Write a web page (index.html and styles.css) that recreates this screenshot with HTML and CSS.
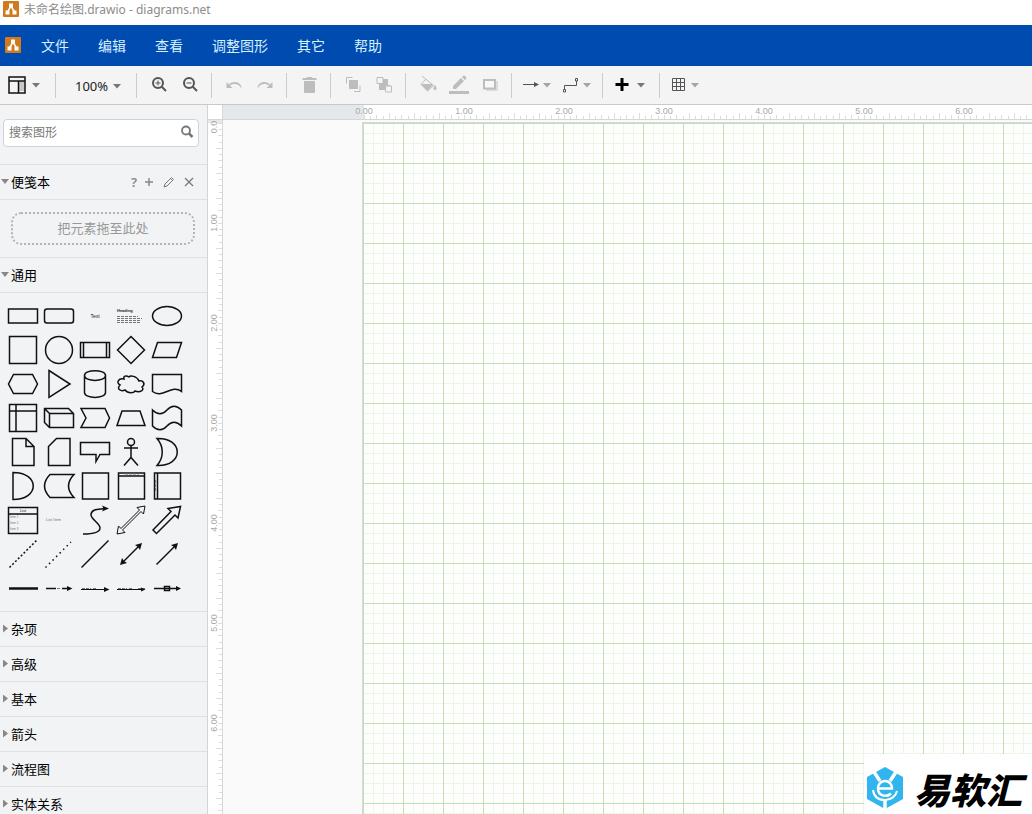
FILE: index.html
```html
<!DOCTYPE html>
<html lang="zh-CN">
<head>
<meta charset="utf-8">
<title>未命名绘图.drawio - diagrams.net</title>
<link rel="stylesheet" href="styles.css">
</head>
<body>
<svg class="defs" width="0" height="0" aria-hidden="true">
  <defs>
    <symbol id="logo" viewBox="0 0 16 16">
      <rect width="16" height="16" rx="1" fill="#d07a1c"/>
      <path d="M8 5 4.500 11M8 5l3.500 6" stroke="#fff" stroke-width="1.500"/>
      <path d="M6 2.500h4v4H6zM2.500 9.500h4v4h-4zM9.500 9.500h4v4h-4z" fill="#fff"/>
    </symbol>
    <symbol id="caret" viewBox="0 0 10 10"><path d="M1 3h8L5 7.500z" fill="currentColor"/></symbol>
  </defs>
</svg>

<header class="titlebar">
  <svg class="app-icon"><use href="#logo"/></svg>
  <span>未命名绘图.drawio - diagrams.net</span>
</header>

<nav class="menubar">
  <svg class="menu-icon"><use href="#logo"/></svg>
  <button>文件</button>
  <button>编辑</button>
  <button>查看</button>
  <button>调整图形</button>
  <button>其它</button>
  <button>帮助</button>
</nav>

<div class="toolbar" role="toolbar">
  <div class="group tight first">
    <button class="drop wide" aria-label="视图">
      <svg class="icon" viewBox="0 0 20 20"><path d="M11.500 6h6v10h-6z" fill="#c8c8c8"/><path d="M2 2h16v16H2zM2 6h16M11.500 6v12" fill="none" stroke="#111" stroke-width="1.500"/></svg>
      <svg class="caret"><use href="#caret"/></svg>
    </button>
  </div>
  <div class="group zoom">
    <button class="drop wide"><span>100%</span><svg class="caret"><use href="#caret"/></svg></button>
  </div>
  <div class="group">
    <button aria-label="放大"><svg class="icon dark" viewBox="0 0 20 20"><circle cx="9" cy="8" r="5" class="s2"/><path d="M12.500 11.500 17 16" class="s2"/><path d="M6.500 8h5M9 5.500v5" class="s1"/></svg></button>
    <button aria-label="缩小"><svg class="icon dark" viewBox="0 0 20 20"><circle cx="9" cy="8" r="5" class="s2"/><path d="M12.500 11.500 17 16" class="s2"/><path d="M6.500 8h5" class="s1"/></svg></button>
  </div>
  <div class="group">
    <button aria-label="撤销"><svg class="icon" viewBox="0 0 20 20"><path d="M2.500 7v6h6L6 10.500C9.500 8 15 8.500 17 13l.5-1C16 6.500 9 5.500 5 9.500z" fill="currentColor"/></svg></button>
    <button aria-label="重做"><svg class="icon" viewBox="0 0 20 20"><path d="M17.500 7v6h-6l2.500-2.500C10.500 8 5 8.500 3 13l-.5-1C4 6.500 11 5.500 15 9.500z" fill="currentColor"/></svg></button>
  </div>
  <div class="group">
    <button aria-label="删除"><svg class="icon" viewBox="0 0 20 20"><path d="M3.500 3h4l1-1h4l1 1h4v2h-14zM5 6h11v11a1 1 0 0 1-1 1H6a1 1 0 0 1-1-1z" fill="currentColor"/></svg></button>
  </div>
  <div class="group">
    <button aria-label="移至最前"><svg class="icon" viewBox="0 0 20 20"><path d="M6 5h9v9H6z" fill="currentColor"/><path d="M3.500 8.500v-6h6M11 16.500h6v-6" class="s1"/></svg></button>
    <button aria-label="移至最后"><svg class="icon" viewBox="0 0 20 20"><path d="M8 4h6v6h2v3h-5v2H5V9h3z" fill="currentColor"/><path d="M3 2.500h6v6H3zM11.500 11h6v6h-6z" fill="#f4f4f4" stroke="currentColor"/></svg></button>
  </div>
  <div class="group">
    <button aria-label="填充颜色"><svg class="icon" viewBox="0 0 20 20"><path d="m4 1 11.500 9.500-6 5.500-6.500-6.500L8 4" class="s1"/><path d="M3 9h12.500l-6 7z" fill="currentColor"/><path d="M17 10c3 4 1 5 0 5s-3-1 0-5" fill="currentColor"/></svg></button>
    <button aria-label="线条颜色"><svg class="icon" viewBox="0 0 20 20"><path d="M0 16h20v3H0zM4 14v-3l8-8 3 3-8 8zM13 2l1-1q1-1 2 0l1 1q1 1 0 2l-1 1z" fill="currentColor"/></svg></button>
    <button aria-label="阴影"><svg class="icon" viewBox="0 0 20 20"><path d="M6 6h12v10H6z" fill="#dcdcdc"/><path d="M4 5h11v8.500H4z" fill="#f8f8f8" stroke="currentColor" stroke-width="2"/></svg></button>
  </div>
  <div class="group tight">
    <button class="drop" aria-label="连接"><svg class="icon dark" viewBox="0 0 20 20"><path d="M2 9.500h13" class="s1"/><path d="m13 7 5 2.500-5 2.500z" fill="currentColor"/></svg><svg class="caret pale"><use href="#caret"/></svg></button>
    <button class="drop" aria-label="航点"><svg class="icon dark" viewBox="0 0 20 20"><path d="M3.500 15V10.500h12V6" class="s1"/><path d="M2.500 14.500h2v2.500h-2zM14.500 3.500h2V6h-2z" class="s1"/></svg><svg class="caret pale"><use href="#caret"/></svg></button>
  </div>
  <div class="group tight insert">
    <button class="drop wide" aria-label="插入"><svg class="icon" viewBox="0 0 20 20"><path d="M10 3v13M3.500 9.500h13" stroke="#000" stroke-width="3"/></svg><svg class="caret"><use href="#caret"/></svg></button>
  </div>
  <div class="group tight">
    <button class="drop" aria-label="表格"><svg class="icon dark" viewBox="0 0 20 20"><path d="M3.500 3.500h12v12h-12zM7.500 3.500v12M11.500 3.500v12M3.500 7.500h12M3.500 11.500h12" class="s1"/></svg><svg class="caret pale"><use href="#caret"/></svg></button>
  </div>
</div>

<main class="workspace">
  <aside class="sidebar">
    <div class="search">
      <input type="text" placeholder="搜索图形" aria-label="搜索图形">
      <button aria-label="搜索"><svg viewBox="0 0 14 14" width="14" height="14"><circle cx="6" cy="5.500" r="4" fill="none" stroke="#777" stroke-width="1.800"/><path d="m9 8.500 3.500 3.500" stroke="#777" stroke-width="2.500"/></svg></button>
    </div>

    <section>
      <div class="heading">
        <button class="toggle open">便笺本</button>
        <button class="tool" aria-label="帮助">?</button>
        <button class="tool" aria-label="添加"><svg viewBox="0 0 12 12"><path d="M6 2v8M2 6h8" stroke="#888" stroke-width="1.500"/></svg></button>
        <button class="tool" aria-label="编辑"><svg viewBox="0 0 12 12"><path d="m1 11 1-3 6.500-6.500 2 2L4 10zM7.500 2.500l2 2" fill="none" stroke="#777"/></svg></button>
        <button class="tool" aria-label="关闭"><svg viewBox="0 0 12 12"><path d="m2 2 8 8M10 2l-8 8" stroke="#777" stroke-width="1.200"/></svg></button>
      </div>
      <div class="drop-wrap"><div class="drop-zone">把元素拖至此处</div></div>
    </section>

    <section>
      <div class="heading"><button class="toggle open">通用</button></div>
      <div class="palette">
        <button aria-label="矩形"><svg viewBox="-18 -17 36 34"><path d="M-14.500-7h29V7h-29z"/></svg></button>
        <button aria-label="圆角矩形"><svg viewBox="-18 -17 36 34"><rect x="-14.500" y="-7" width="29" height="14" rx="2.500"/></svg></button>
        <button aria-label="文本"><svg viewBox="-18 -17 36 34"><text x="0" y="2" font-size="5" text-anchor="middle">Text</text></svg></button>
        <button aria-label="文本框"><svg viewBox="-18 -17 36 34"><text x="-14" y="-4" font-size="4" font-weight="bold">Heading</text><path class="lines" d="M-14 .5h21M-14 2.500h25M-14 4.500h24M-14 6.500h24"/></svg></button>
        <button aria-label="椭圆"><svg viewBox="-18 -17 36 34"><ellipse rx="14.500" ry="9.500"/></svg></button>

        <button aria-label="正方形"><svg viewBox="-18 -17 36 34"><path d="M-13.500-13.500h27v27h-27z"/></svg></button>
        <button aria-label="圆形"><svg viewBox="-18 -17 36 34"><circle r="13.500"/></svg></button>
        <button aria-label="流程"><svg viewBox="-18 -17 36 34"><path d="M-14.500-7.500h29v15h-29zM-11.500-7.500v15M11.500-7.500v15"/></svg></button>
        <button aria-label="菱形"><svg viewBox="-18 -17 36 34"><path d="M0-13.500 13.500 0 0 13.500-13.500 0z"/></svg></button>
        <button aria-label="平行四边形"><svg viewBox="-18 -17 36 34"><path d="M-9.500-7.500h24l-5 15h-24z"/></svg></button>

        <button aria-label="六边形"><svg viewBox="-18 -17 36 34"><path d="M-9.500-9.500h19L14.500 0l-5 9.500h-19L-14.500 0z"/></svg></button>
        <button aria-label="三角形"><svg viewBox="-18 -17 36 34"><path d="M-10-13.500 11 0-10 13.500z"/></svg></button>
        <button aria-label="圆柱"><svg viewBox="-18 -17 36 34"><path d="M-10.500-8.500v17c0 6.500 21 6.500 21 0v-17c0-6.500-21-6.500-21 0 0 6.500 21 6.500 21 0"/></svg></button>
        <button aria-label="云"><svg viewBox="-18 -17 36 34"><path d="M-7-5C-13-6-15-1-11 1c-4 4 1 7 5 5 3 4 9 3 10 1 5 2 10-1 7-4 4-3 1-7-3-6C6-8-1-9-2-7c-3-2-6-1-5 2z"/></svg></button>
        <button aria-label="文档"><svg viewBox="-18 -17 36 34"><path d="M-14.500-9.500h29v17c-10-8-19 8-29 0z"/></svg></button>

        <button aria-label="内部存储"><svg viewBox="-18 -17 36 34"><path d="M-13.500-13.500h27v27h-27zM-7-13.500v27M-13.500-7h27"/></svg></button>
        <button aria-label="立方体"><svg viewBox="-18 -17 36 34"><path d="M-14.500-9.500h24l5 5v14h-24l-5-5zM-14.500-9.500l5 5h24M-9.500-4.500v14"/></svg></button>
        <button aria-label="步骤"><svg viewBox="-18 -17 36 34"><path d="M-14-9.500h24L14.500 0 10 9.500h-24L-9 0z"/></svg></button>
        <button aria-label="梯形"><svg viewBox="-18 -17 36 34"><path d="M-9-7H9l5 14.500h-28z"/></svg></button>
        <button aria-label="磁带"><svg viewBox="-18 -17 36 34"><path d="M-14.500-8c5 5 10 5 14.500 0s9.500-5 14.500 0V8C9.500 3 4.500 3 0 8s-9.500 5-14.500 0z"/></svg></button>

        <button aria-label="便笺"><svg viewBox="-18 -17 36 34"><path d="M-10.500-13.500H3l8 8v19h-21.500zM3-13.500v8h8"/></svg></button>
        <button aria-label="卡片"><svg viewBox="-18 -17 36 34"><path d="M-2.500-13.500H11v27h-21.500v-19z"/></svg></button>
        <button aria-label="标注"><svg viewBox="-18 -17 36 34"><path d="M-14.500-9.500h29V2.500H5L1 9.500V2.500h-15.500z"/></svg></button>
        <button aria-label="角色"><svg viewBox="-18 -17 36 34"><circle cy="-10" r="3.500"/><path d="M0-6.500v12M-7-4H7M-7 13.500l7-8 7 8"/></svg></button>
        <button aria-label="异或"><svg viewBox="-18 -17 36 34"><path d="M-10-13.500c27-1 27 28 0 27 7-8 7-19 0-27z"/></svg></button>

        <button aria-label="与门"><svg viewBox="-18 -17 36 34"><path d="M-10-13.500c27 0 27 27 0 27z"/></svg></button>
        <button aria-label="数据存储"><svg viewBox="-18 -17 36 34"><path d="M-9-11.500h24q-11 11.500 0 23H-9q-11-11.500 0-23z"/></svg></button>
        <button aria-label="容器"><svg viewBox="-18 -17 36 34"><path d="M-12.500-13h26v26h-26z"/></svg></button>
        <button aria-label="垂直容器"><svg viewBox="-18 -17 36 34"><path d="M-12.500-13h26v26h-26zM-12.500-10h26"/><path class="lines" d="M-6-12H8"/></svg></button>
        <button aria-label="水平容器"><svg viewBox="-18 -17 36 34"><path d="M-12.500-13h26v26h-26zM-9.500-13v26"/><path class="lines" d="M-11.500-6V6"/></svg></button>

        <button aria-label="列表"><svg viewBox="-18 -17 36 34"><path d="M-14.500-12.500h29v26h-29zM-14.500-6h29"/><text x="0" y="-8" font-size="4" text-anchor="middle">List</text><text class="grey" x="-13" y="-2" font-size="3">Item 1</text><text class="grey" x="-13" y="4" font-size="3">Item 2</text><text class="grey" x="-13" y="10" font-size="3">Item 3</text></svg></button>
        <button aria-label="列表项"><svg viewBox="-18 -17 36 34"><text class="grey" x="-13" y="1" font-size="4">List Item</text></svg></button>
        <button aria-label="曲线"><svg viewBox="-18 -17 36 34"><path d="M-12 14C-5 14 5 13 5 8 5 3-5-1-4-6c1-5 8-5 14-5.500"/><path class="solid" d="m7-14.500 7 3L7-8.500l1.500-3z"/></svg></button>
        <button aria-label="双向箭头"><svg viewBox="-18 -17 36 34"><path class="thin" d="M14-14 12.500-6l-2.500-2.500L-8.500 10l2.500 2.500L-14 14l1.500-8L-10 8.500 8.500-10 6-12.500z"/></svg></button>
        <button aria-label="箭头"><svg viewBox="-18 -17 36 34"><path d="M13.500-13.500 11-2 8-5-10.500 13.500l-3.500-3.500L4-8.500 1-11.500z"/></svg></button>

        <button aria-label="虚线"><svg viewBox="-18 -17 36 34"><path d="m-13.500 13.500 27-27" stroke-dasharray="2 2"/></svg></button>
        <button aria-label="点线"><svg viewBox="-18 -17 36 34"><path d="M-13.500 13.500 12-12" stroke-dasharray="1.500 3.500"/></svg></button>
        <button aria-label="直线"><svg viewBox="-18 -17 36 34"><path d="m-13.500 13.500 27-27"/></svg></button>
        <button aria-label="双向连接线"><svg viewBox="-18 -17 36 34"><path d="M-9 9 9-9"/><path class="solid" d="m11-11-2 7-2-3-3-2zM-11 11l2-7 2 3 3 2z"/></svg></button>
        <button aria-label="定向连接线"><svg viewBox="-18 -17 36 34"><path d="M-10.500 10.500 9-9"/><path class="solid" d="m11-11-2 7-2-3-3-2z"/></svg></button>

        <button aria-label="链接"><svg viewBox="-18 -17 36 34"><path class="thick" d="M-14 .5h29"/></svg></button>
        <button aria-label="带标签连接线"><svg viewBox="-18 -17 36 34"><path d="M-13 .5h10M3 .5h8"/><path class="lines" d="M-2 .5h4"/><path class="solid" d="M8-2l5.500 2.500L8 3z"/></svg></button>
        <button aria-label="两标签连接线"><svg viewBox="-18 -17 36 34"><path class="thin" d="M-14 1.500H11"/><path class="lines" d="M-13 .5h9M-2 .5h4"/><path class="solid" d="M9-1l5.500 2.500L9 4z"/></svg></button>
        <button aria-label="三标签连接线"><svg viewBox="-18 -17 36 34"><path class="thin" d="M-14 1.500H11"/><path class="lines" d="M-13 .5h9M-2 .5h4M7 .5h7"/><path class="solid" d="M10-.5l4.500 2-4.500 2z"/></svg></button>
        <button aria-label="带符号连接线"><svg viewBox="-18 -17 36 34"><path d="M-13 .5H11M-2.500-1.500h5v4h-5z"/><path class="solid" d="M9-2l5 2.500L9 3z"/></svg></button>
      </div>
    </section>

    <section><div class="heading"><button class="toggle">杂项</button></div></section>
    <section><div class="heading"><button class="toggle">高级</button></div></section>
    <section><div class="heading"><button class="toggle">基本</button></div></section>
    <section><div class="heading"><button class="toggle">箭头</button></div></section>
    <section><div class="heading"><button class="toggle">流程图</button></div></section>
    <section><div class="heading"><button class="toggle">实体关系</button></div></section>
  </aside>

  <div class="editor">
    <div class="corner"></div>
    <svg class="ruler-h">
      <defs><pattern id="ticks-h" x="141" width="100" height="14" patternUnits="userSpaceOnUse"><path class="tick" d="M.5 10v4M6.500 11v3M12.500 10v4M19.500 11v3M25.500 8v6M31.500 11v3M37.500 10v4M44.500 11v3M50.500 8v6M56.500 11v3M62.500 10v4M69.500 11v3M75.500 8v6M81.500 11v3M87.500 10v4M94.500 11v3"/></pattern></defs>
      <rect class="outside" width="141" height="14"/>
      <rect x="141" width="100%" height="14" fill="url(#ticks-h)"/>
      <text x="141" y="9">0.00</text><text x="241" y="9">1.00</text><text x="341" y="9">2.00</text><text x="441" y="9">3.00</text><text x="541" y="9">4.00</text><text x="641" y="9">5.00</text><text x="741" y="9">6.00</text>
    </svg>
    <svg class="ruler-v">
      <defs><pattern id="ticks-v" y="3" width="14" height="100" patternUnits="userSpaceOnUse"><path class="tick" d="M10 .5h4M11 6.500h3M10 12.500h4M11 19.500h3M8 25.500h6M11 31.500h3M10 37.500h4M11 44.500h3M8 50.500h6M11 56.500h3M10 62.500h4M11 69.500h3M8 75.500h6M11 81.500h3M10 87.500h4M11 94.500h3"/></pattern></defs>
      <rect class="outside" width="14" height="3"/>
      <rect y="3" width="14" height="100%" fill="url(#ticks-v)"/>
      <g transform="rotate(-90)"><text x="-7" y="9">0.0</text><text x="-103" y="9">1.00</text><text x="-203" y="9">2.00</text><text x="-303" y="9">3.00</text><text x="-403" y="9">4.00</text><text x="-503" y="9">5.00</text><text x="-603" y="9">6.00</text></g>
    </svg>
    <div class="canvas"><div class="page"></div></div>
  </div>
</main>

<div class="watermark">
  <svg viewBox="0 0 38 44" width="38" height="44">
    <path d="M19 1 37 11v22L19 43 1 33V11z" fill="#30b5ee"/>
    <path d="m6 3 8 12M32 3l-8 12M19 34v10" fill="none" stroke="#fff" stroke-width="3.500"/>
    <path d="M12 22.500h14c0-10-14-10-14 0 0 8 9 9 13 5" fill="none" stroke="#fff" stroke-width="2.500"/>
    <path d="M7 24c1 7 6 10 12 10s11-4 12-9" fill="none" stroke="#fff" stroke-width="2"/>
  </svg>
  <span>易软汇</span>
</div>
</body>
</html>
```
FILE: styles.css
```css
* { box-sizing: border-box; }

body {
  margin: 0;
  height: 100vh;
  display: flex;
  flex-direction: column;
  overflow: hidden;
  background: #fff;
  color: #000;
  font-family: "Noto Sans", "Noto Sans CJK SC", sans-serif;
  font-size: 13px;
}

button {
  margin: 0;
  padding: 0;
  border: 0;
  background: none;
  color: inherit;
  font: inherit;
}

svg { display: block; flex: none; }
.defs { position: absolute; }

/* Title and menus */
.titlebar {
  flex: none;
  display: flex;
  align-items: center;
  gap: 5px;
  height: 25px;
  padding: 0 3px 7px;
  color: #8c8c8c;
  font-size: 12px;
}
.app-icon, .menu-icon { width: 16px; height: 16px; }

.menubar {
  flex: none;
  display: flex;
  align-items: center;
  gap: 29px;
  height: 41px;
  padding: 0 0 2px 5px;
  background: #004bb0;
  color: #d5f0ff;
  font-size: 14px;
}
.menu-icon { margin-right: -9px; }

/* Toolbar */
.toolbar {
  flex: none;
  display: flex;
  align-items: center;
  height: 39px;
  background: #f4f4f4;
  border-bottom: 1px solid #c9c9c9;
}
.group {
  display: flex;
  align-items: center;
  gap: 11px;
  height: 25px;
  padding: 0 11px 0 12px;
  border-right: 1px solid #cbcbcb;
  color: #bdbdbd;
}
.group:last-child { border-right: 0; }
.tight { gap: 9px; padding: 0 10px 0 9px; }
.first { padding: 0 14px 0 7px; }
.insert { padding-right: 13px; }
.zoom { padding: 2px 14px 0 19px; color: #222; }
.icon { width: 20px; height: 20px; }
.dark { color: #555; }
.drop { display: flex; align-items: center; gap: 1px; }
.wide { gap: 4px; }
.caret { width: 10px; height: 10px; color: #777; }
.pale { color: #a5a5a5; }
.s1, .s2 { fill: none; stroke: currentColor; }
.s2 { stroke-width: 2; }

/* Sidebar */
.workspace { flex: 1; min-height: 0; display: flex; }
.sidebar {
  flex: none;
  width: 208px;
  overflow: hidden;
  background: #f1f3f5;
  border-right: 1px solid #d2d4d6;
}
.search {
  display: flex;
  align-items: center;
  height: 28px;
  margin: 14px 8px 17px 3px;
  padding: 0 4px 2px 5px;
  background: #fff;
  border: 1px solid #d0d3d6;
  border-radius: 4px;
}
.search input {
  flex: 1;
  min-width: 0;
  padding: 0;
  border: 0;
  outline: 0;
  background: none;
  font: inherit;
  font-size: 12px;
}
.search input::placeholder { color: #777; }

.sidebar section { border-top: 1px solid #dee0e2; }
.heading {
  display: flex;
  align-items: center;
  height: 34px;
  padding: 0 12px 1px 1px;
}
.toggle {
  flex: 1;
  display: flex;
  align-items: center;
  text-align: left;
}
.toggle::before {
  content: "";
  width: 5px;
  height: 8px;
  margin: 0 3px 0 2px;
  background: #888;
  clip-path: polygon(0 0, 100% 50%, 0 100%);
}
.toggle.open::before {
  width: 8px;
  height: 5px;
  margin: 0 2px 0 0;
  clip-path: polygon(0 0, 100% 0, 50% 100%);
}
.tool { width: 12px; margin-left: 3px; color: #888; font-weight: 600; }
.tool + .tool ~ .tool { margin-left: 8px; }
.tool svg { width: 12px; height: 12px; }

.drop-wrap { padding: 12px 12px 12px 11px; border-top: 1px solid #dee0e2; }
.drop-zone {
  height: 33px;
  border: 2px dotted #b2b4b6;
  border-radius: 10px;
  color: #999;
  line-height: 29px;
  text-align: center;
}

.palette {
  display: grid;
  grid-template-columns: repeat(auto-fill, 36px);
  grid-auto-rows: 34px;
  padding: 6px 5px;
  border-top: 1px solid #dee0e2;
}
.palette svg {
  width: 36px;
  height: 34px;
  fill: none;
  stroke: #111;
  stroke-width: 1.5;
}
.palette text {
  fill: #222;
  stroke: none;
  font-family: "Liberation Sans", sans-serif;
}
.palette .grey { fill: #777; }
.palette .lines { stroke: #777; stroke-width: 1; stroke-dasharray: 3 1; }
.palette .thin { stroke-width: 1; }
.palette .thick { stroke-width: 2.5; }
.palette .solid { fill: #111; stroke: none; }

/* Rulers and drawing area */
.editor {
  flex: 1;
  min-width: 0;
  display: grid;
  grid-template: 15px 1fr / 15px 1fr;
}
.corner, .ruler-h { border-bottom: 1px solid #d6d6d6; }
.corner, .ruler-v { border-right: 1px solid #d6d6d6; }
.ruler-h, .ruler-v {
  width: 100%;
  height: 100%;
  overflow: hidden;
  fill: #a8a8a8;
  font-family: "Liberation Sans", sans-serif;
  font-size: 9px;
  text-anchor: middle;
}
.ruler-h .outside, .ruler-v .outside { fill: #e4e8eb; }
.tick { stroke: #ddd; }

.canvas {
  display: grid;
  overflow: hidden;
  padding: 2px 0 0 139px;
  background: #fafafb;
}
.page {
  border: solid #d8d8d8;
  border-width: 1px 0 0 1px;
  background-color: #fefffd;
  background-image:
    linear-gradient(#c4dfb8 1px, transparent 1px),
    linear-gradient(90deg, #c4dfb8 1px, transparent 1px),
    linear-gradient(#ecf6e8 1px, transparent 1px),
    linear-gradient(90deg, #ecf6e8 1px, transparent 1px);
  background-size: 40px 40px, 40px 40px, 10px 10px, 10px 10px;
}

.watermark {
  position: absolute;
  right: 0;
  bottom: 0;
  display: flex;
  align-items: center;
  gap: 10px;
  height: 60px;
  padding: 8px 10px 0 2px;
  background: #fff;
  font-family: "Noto Sans CJK SC", sans-serif;
  font-size: 36px;
  font-style: italic;
  font-weight: 900;
  line-height: 44px;
}
```
